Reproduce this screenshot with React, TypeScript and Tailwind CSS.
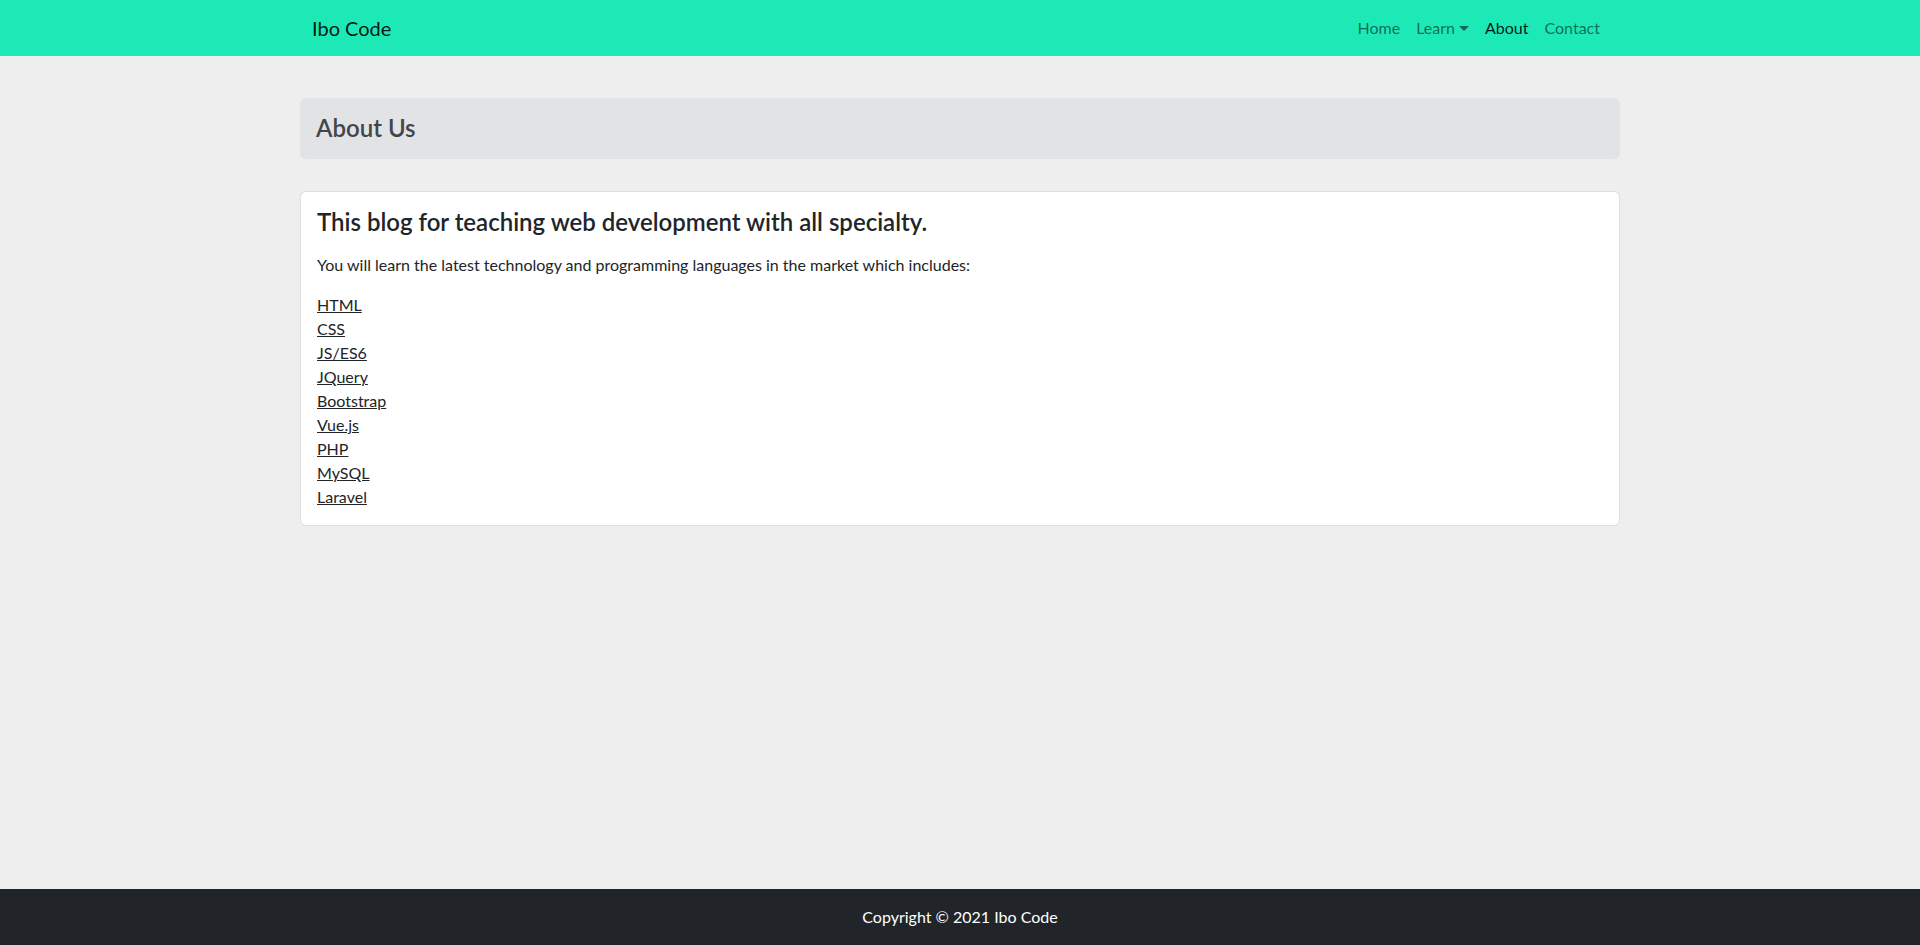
import React from 'react';

const LINKS = ['HTML', 'CSS', 'JS/ES6', 'JQuery', 'Bootstrap', 'Vue.js', 'PHP', 'MySQL', 'Laravel'];

const NAV = [
  { label: 'Home', active: false, dropdown: false },
  { label: 'Learn', active: false, dropdown: true },
  { label: 'About', active: true, dropdown: false },
  { label: 'Contact', active: false, dropdown: false },
];

function Navbar() {
  return (
    <nav className="bg-[#1de9b6] py-2">
      <div className="mx-auto flex w-[1320px] items-center justify-between px-3">
        <a href="#" className="py-[5px] text-[20px] leading-[30px] text-black/90">
          Ibo Code
        </a>
        <ul className="flex items-center">
          {NAV.map((item) => (
            <li key={item.label}>
              <a
                href="#"
                className={`flex items-center px-2 py-2 text-base leading-6 ${item.active ? 'text-black/90' : 'text-black/55'}`}
              >
                {item.label}
                {item.dropdown && (
                  <span className="ml-[4px] mt-[1px] inline-block h-0 w-0 border-x-[5px] border-t-[5px] border-x-transparent border-t-current" />
                )}
              </a>
            </li>
          ))}
        </ul>
      </div>
    </nav>
  );
}

export default function App() {
  return (
    <div className="flex min-h-screen flex-col bg-[#eeeeee] font-['Lato',sans-serif] text-[#212529]">
      <Navbar />

      <main className="mx-auto w-[1320px] flex-1 pt-[42px]">
        <div className="rounded-md bg-[#e2e3e5] p-4">
          <h4 className="text-2xl font-semibold leading-[28.8px] text-[#41464b]">About Us</h4>
        </div>

        <div className="mt-8 rounded-md border border-black/[.125] bg-white p-4">
          <h4 className="mb-4 text-2xl font-semibold leading-[28.8px]">
            This blog for teaching web development with all specialty.
          </h4>
          <p className="mb-4 text-base leading-6">
            You will learn the latest technology and programming languages in the market which includes:
          </p>
          <ul>
            {LINKS.map((l) => (
              <li key={l} className="text-base leading-6">
                <a href="#" className="text-[#212529] underline">
                  {l}
                </a>
              </li>
            ))}
          </ul>
        </div>
      </main>

      <footer className="bg-[#212529] py-4 text-center text-base leading-6 text-white">
        Copyright © 2021 Ibo Code
      </footer>
    </div>
  );
}
